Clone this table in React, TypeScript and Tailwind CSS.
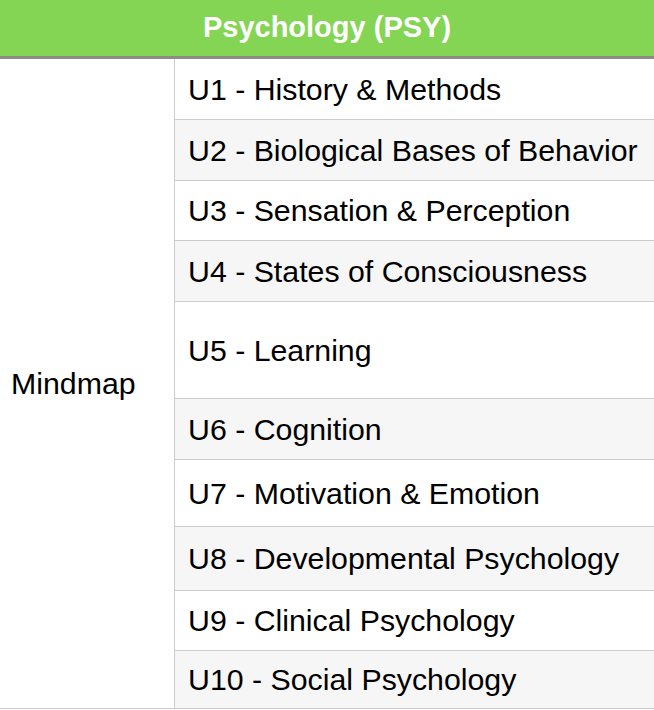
const units = [
  { label: "U1 - History & Methods", h: "h-[61px]", bg: "bg-white" },
  { label: "U2 - Biological Bases of Behavior", h: "h-[61px]", bg: "bg-[#f6f6f6]" },
  { label: "U3 - Sensation & Perception", h: "h-[60px]", bg: "bg-white" },
  { label: "U4 - States of Consciousness", h: "h-[61px]", bg: "bg-[#f6f6f6]" },
  { label: "U5 - Learning", h: "h-[97px]", bg: "bg-white" },
  { label: "U6 - Cognition", h: "h-[61px]", bg: "bg-[#f6f6f6]" },
  { label: "U7 - Motivation & Emotion", h: "h-[67px]", bg: "bg-white" },
  { label: "U8 - Developmental Psychology", h: "h-[64px]", bg: "bg-[#f6f6f6]" },
  { label: "U9 - Clinical Psychology", h: "h-[60px]", bg: "bg-white" },
  { label: "U10 - Social Psychology", h: "h-[57px]", bg: "bg-[#f6f6f6]" },
];

export default function App() {
  return (
    <div className="w-[654px] bg-white font-['Liberation_Sans',Arial,sans-serif] text-black">
      <div className="flex h-[59px] items-center justify-center border-b-[3px] border-[#8e8b86] bg-[#84d553]">
        <span className="text-[29px] font-bold text-white">Psychology (PSY)</span>
      </div>
      <div className="flex border-b border-[#cccccc]">
        <div className="flex w-[175px] shrink-0 items-center border-r border-[#cccccc] pl-[11px] text-[30.3px]">
          Mindmap
        </div>
        <div className="flex flex-1 flex-col">
          {units.map((u, i) => (
            <div
              key={u.label}
              className={`flex items-center pt-px pl-[13px] text-[30.3px] ${u.h} ${u.bg} ${
                i < units.length - 1 ? "border-b border-[#cccccc]" : ""
              }`}
            >
              {u.label}
            </div>
          ))}
        </div>
      </div>
    </div>
  );
}
